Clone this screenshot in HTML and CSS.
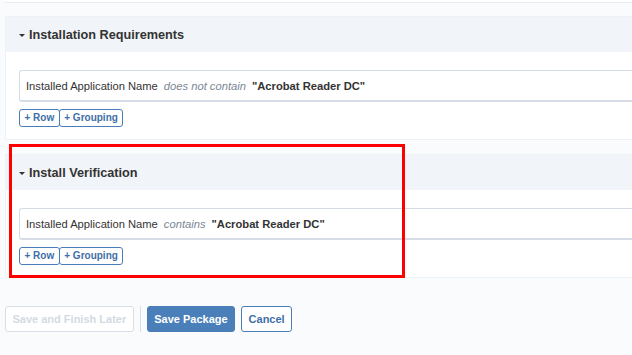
FILE: index.html
```html
<!DOCTYPE html>
<html lang="en">
<head>
	<meta charset="utf-8">
	<title>Package</title>
	<link rel="stylesheet" href="styles.css">
</head>
<body>
	<div class="topcard"></div>
	<div class="section">
		<h3 class="sec-head"><span class="caret"></span>Installation Requirements</h3>
		<div class="sec-body">
			<div class="rule">
				<span class="field">Installed Application Name</span>
				<i class="op">does not contain</i>
				<b class="val">"Acrobat Reader DC"</b>
			</div>
			<div class="adders">
				<a class="add">+ Row</a><a class="add">+ Grouping</a>
			</div>
		</div>
	</div>
	<div class="section marked">
		<h3 class="sec-head"><span class="caret"></span>Install Verification</h3>
		<div class="sec-body">
			<div class="rule">
				<span class="field">Installed Application Name</span>
				<i class="op">contains</i>
				<b class="val">"Acrobat Reader DC"</b>
			</div>
			<div class="adders">
				<a class="add">+ Row</a><a class="add">+ Grouping</a>
			</div>
		</div>
		<div class="highlight"></div>
	</div>
	<div class="actions">
		<a class="btn disabled">Save and Finish Later</a>
		<span class="sep"></span>
		<a class="btn primary">Save Package</a>
		<a class="btn">Cancel</a>
	</div>
</body>
</html>
```
FILE: styles.css
```css
body{margin:0;padding:0 0 0 5px;background:#f9fbfd;font-family:"Liberation Sans",Arial,sans-serif;color:#333;overflow:hidden;}

.topcard{height:2px;background:#fff;border-bottom:1px solid #e8edf3;margin-bottom:13px;}

.section{position:relative;background:#fff;border:1px solid #eef1f5;border-right:none;margin-bottom:14px;}
.sec-head{margin:0;height:35px;display:flex;align-items:center;padding-left:13px;background:#f1f4f8;font-size:12.7px;font-weight:bold;color:#333;}
.caret{display:inline-block;width:0;height:0;border-left:3px solid transparent;border-right:3px solid transparent;border-top:3px solid #333;margin-right:4px;margin-top:1px;}
.sec-body{padding:18px 0 12px 13px;}

.rule{height:29px;display:flex;align-items:center;gap:6px;padding-left:6px;border:1px solid #d5dce5;border-bottom-width:2px;border-right:none;border-radius:3px 0 0 3px;font-size:11.2px;}
.op{color:#7a8796;}
.val{font-weight:bold;}

.adders{display:flex;margin-top:7px;}
.add{display:inline-block;height:16px;line-height:16px;padding:0 4.5px;border:1px solid #4a7db8;border-radius:3px;color:#3f6fa8;font-size:10px;font-weight:bold;}
.add+.add{margin-left:-1px;}

.highlight{position:absolute;left:3px;top:-11px;width:390px;height:128px;border:3px solid #ff0000;}

.actions{display:flex;align-items:center;gap:6px;margin-top:28px;}
.btn{display:inline-block;height:24px;line-height:24px;padding:0 6.5px;border:1px solid #4a7db8;border-radius:3px;color:#3f6fa8;font-size:11px;font-weight:bold;background:#fff;}
.btn.disabled{border-color:#d8dee6;color:#d3dae3;}
.btn.primary{background:#4a7fba;color:#fff;}
.sep{width:1px;height:26px;background:#d8dee6;}
```
